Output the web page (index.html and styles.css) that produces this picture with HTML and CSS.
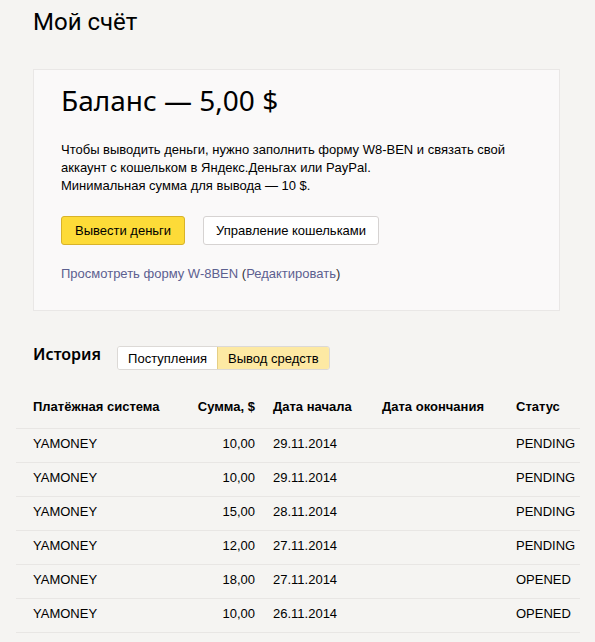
FILE: index.html
```html
<!DOCTYPE html>
<html lang="ru">
<head>
<meta charset="utf-8">
<title>Мой счёт</title>
<link rel="stylesheet" href="styles.css">
</head>
<body>
<div class="page">
  <h1 class="title">Мой счёт</h1>
  <section class="card">
    <h2 class="balance">Баланс — 5,00 $</h2>
    <p class="info">Чтобы выводить деньги, нужно заполнить форму W8-BEN и связать свой<br>аккаунт с кошельком в Яндекс.Деньгах или PayPal.<br>Минимальная сумма для вывода — 10 $.</p>
    <div class="actions">
      <button class="btn btn-yellow">Вывести деньги</button>
      <button class="btn btn-white">Управление кошельками</button>
    </div>
    <p class="links"><a class="link" href="#">Просмотреть форму W-8BEN</a> (<a class="link" href="#">Редактировать</a>)</p>
  </section>
  <div class="history-head">
    <h3 class="history-title">История</h3>
    <div class="tabs">
      <span class="tab">Поступления</span>
      <span class="tab tab-active">Вывод средств</span>
    </div>
  </div>
  <div class="table">
    <div class="row row-head">
      <div>Платёжная система</div>
      <div class="num">Сумма, $</div>
      <div>Дата начала</div>
      <div>Дата окончания</div>
      <div>Статус</div>
    </div>
    <div class="row"><div>YAMONEY</div><div class="num">10,00</div><div>29.11.2014</div><div></div><div>PENDING</div></div>
    <div class="row"><div>YAMONEY</div><div class="num">10,00</div><div>29.11.2014</div><div></div><div>PENDING</div></div>
    <div class="row"><div>YAMONEY</div><div class="num">15,00</div><div>28.11.2014</div><div></div><div>PENDING</div></div>
    <div class="row"><div>YAMONEY</div><div class="num">12,00</div><div>27.11.2014</div><div></div><div>PENDING</div></div>
    <div class="row"><div>YAMONEY</div><div class="num">18,00</div><div>27.11.2014</div><div></div><div>OPENED</div></div>
    <div class="row"><div>YAMONEY</div><div class="num">10,00</div><div>26.11.2014</div><div></div><div>OPENED</div></div>
  </div>
</div>
</body>
</html>
```

FILE: styles.css
```css
html, body {
  margin: 0;
  padding: 0;
  background: #f5f4f2;
}
body {
  font-family: "Liberation Sans", Arial, sans-serif;
  font-size: 13px;
  color: #000;
}
.page {
  width: 595px;
  padding-bottom: 20px;
}
.title {
  margin: 0;
  padding: 7px 0 0 33px;
  font-family: Roboto, "Noto Sans", sans-serif;
  font-weight: 400;
  font-size: 24px;
  line-height: 30px;
  height: 69px;
  box-sizing: border-box;
}
.card {
  margin-left: 33px;
  width: 527px;
  box-sizing: border-box;
  background: #faf9f9;
  border: 1px solid #e9e7e6;
  padding: 12px 27px 0 27px;
  height: 242px;
}
.balance {
  margin: 0;
  font-family: "Noto Sans", "Open Sans", sans-serif;
  font-weight: 400;
  font-size: 28px;
  line-height: 36px;
}
.info {
  margin: 23px 0 0 0;
  line-height: 18px;
}
.actions {
  display: flex;
  gap: 18px;
  margin-top: 21px;
}
.btn {
  font-family: "Liberation Sans", Arial, sans-serif;
  font-size: 13px;
  height: 29px;
  padding: 0 13px;
  border-radius: 3px;
  color: #000;
  cursor: pointer;
}
.btn-yellow {
  background: #fddb38;
  border: 1px solid #d8b32a;
}
.btn-white {
  background: #fff;
  border: 1px solid #d6d3d2;
  padding: 0 12px;
}
.links {
  margin: 20px 0 0 0;
  line-height: 18px;
  color: #333;
}
.link {
  color: #5c6090;
  text-decoration: none;
}
.history-head {
  display: flex;
  align-items: center;
  gap: 16px;
  margin: 35px 0 0 33px;
  height: 24px;
}
.history-title {
  margin: 0;
  font-family: "Noto Sans", "Open Sans", sans-serif;
  font-weight: 600;
  font-size: 16px;
  line-height: 20px;
  position: relative;
  top: -4px;
}
.tabs {
  display: flex;
  height: 24px;
  border: 1px solid #dcd9d6;
  border-radius: 3px;
  overflow: hidden;
  box-sizing: border-box;
}
.tab {
  display: flex;
  align-items: center;
  padding: 0 10px;
  background: #fff;
}
.tab-active {
  background: #fde9a3;
  border-left: 1px solid #e5cf86;
}
.table {
  margin: 16px 15px 0 16px;
}
.row {
  display: grid;
  grid-template-columns: 132px 72px 91px 116px 64px;
  column-gap: 18px;
  padding-left: 17px;
  padding-bottom: 5px;
  height: 34px;
  align-items: center;
  border-bottom: 1px solid #e8e6e4;
  box-sizing: border-box;
  white-space: nowrap;
}
.row-head {
  font-weight: bold;
  height: 43px;
  padding-bottom: 1px;
}
.num {
  text-align: right;
}
```
